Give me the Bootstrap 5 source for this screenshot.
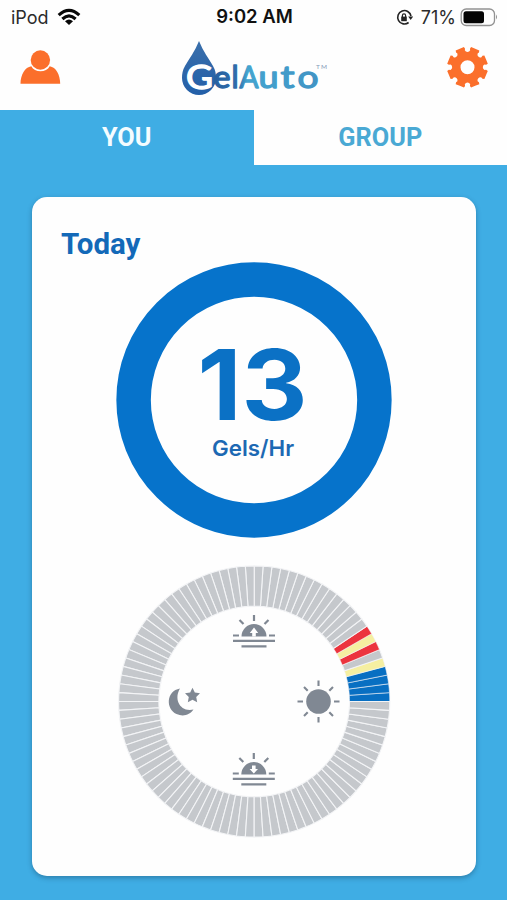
<!DOCTYPE html>
<html lang="en">
<head>
<meta charset="utf-8">
<meta name="viewport" content="width=device-width, initial-scale=1">
<title>GelAuto</title>
<link rel="stylesheet" href="https://cdn.jsdelivr.net/npm/bootstrap@5.3.0/dist/css/bootstrap.min.css">
<style>
body{background:#3fade4;font-family:Inter,"Liberation Sans",sans-serif;height:900px;overflow:hidden}
.top-area{height:110px;background:#fefefe}
.status-row{height:34px;padding:0 9px 0 11px;font-size:18px;color:#2b2b2b}
.status-row>div{flex:1 1 0}
.clock{font-weight:600;font-size:18.500px;color:#111;white-space:nowrap}
.brand-row{height:76px;padding:0 19px 0 20px}
.tab-row{height:55px;font-family:Roboto,sans-serif;font-weight:700;font-size:25.300px}
.tab-row .nav-link{border-radius:0;padding:0;color:#4aa9d4;background:#fefefe;height:55px;line-height:56px}
.tab-row .nav-link.active{background:#3fade4;color:#f4fcff}
.panel{margin:32px 31px 0 32px;height:679px;border:0;border-radius:15px;background:#fefefe;box-shadow:0 2px 5px rgba(20,60,90,.4)}
.panel h1{font:700 29.5px/36px Roboto,sans-serif;color:#1369b8;margin:29px 0 0 29px}
svg{display:block}
svg text{font-family:Inter,sans-serif}
.logo text{font-family:Lato,sans-serif;font-weight:400}
</style>
<script src="https://cdn.jsdelivr.net/npm/bootstrap@5.3.0/dist/js/bootstrap.bundle.min.js"></script>
</head>
<body>
<header class="top-area">
  <div class="status-row d-flex align-items-center">
    <div class="d-flex align-items-center gap-2"><span>iPod</span>
      <svg width="24" height="18" viewBox="0 0 24 18" fill="none" stroke="#080808" stroke-width="3.1"><path d="M1.7 7.2Q12 -2.5 22.3 7.2M5.4 11Q12 4.8 18.6 11"/><path d="M8 13.2Q12 9.8 16 13.2L12 17Z" fill="#080808" stroke="none"/></svg>
    </div>
    <div class="clock text-center">9:02 AM</div>
    <div class="d-flex align-items-center justify-content-end">
      <svg width="17" height="17" viewBox="0 0 17 17" class="me-2" fill="none" stroke="#222" stroke-width="1.6"><path d="M12.6 13.5A6.7 6.7 0 1 1 15 7"/><path d="M12.2 7.5h5l-2.5 3.4z" fill="#222" stroke="none"/><path d="M5.2 7.6h5.6v4.6H5.2z" fill="#222" stroke="none"/><path d="M6.4 8V6.4a1.6 1.6 0 0 1 3.2 0V8" stroke-width="1.2"/></svg>
      <span>71%</span>
      <svg width="38" height="19" viewBox="0 0 38 19" class="ms-1"><rect x="1.2" y="1" width="33.3" height="16.5" rx="5" fill="none" stroke="#929292" stroke-width="1.3"/><rect x="3.5" y="3.2" width="20.5" height="12" rx="2.5" fill="#050505"/><path d="M36 6.5q2 2.5 0 5z" fill="#929292"/></svg>
    </div>
  </div>
  <div class="brand-row d-flex justify-content-between">
    <svg width="41" height="76" viewBox="20 34 41 76" fill="#fb6f2b"><path d="M20.5 83.7C20.500 75 25 67 31.300 66.200C33 69.500 36.500 71.200 40.500 71.200C44.500 71.200 48 69.500 49.700 66.200C56 67 60.200 75 60.200 83.700Z"/><circle cx="40.4" cy="60" r="9.7"/></svg>
    <svg class="logo" width="150" height="76" viewBox="179 34 150 76" role="img" aria-label="GelAuto">
      <defs><linearGradient id="dropFill" x1="0" y1="0" x2="0" y2="1"><stop offset="0" stop-color="#3a6fab"/><stop offset="1" stop-color="#235fa8"/></linearGradient>
      <linearGradient id="wordFill" gradientUnits="userSpaceOnUse" x1="213" y1="0" x2="320" y2="0"><stop offset="0" stop-color="#285f9f"/><stop offset=".24" stop-color="#2e6fac"/><stop offset=".32" stop-color="#44a4cf"/><stop offset="1" stop-color="#4193c4"/></linearGradient></defs>
      <path d="M199 41C203 51 209 59 213 66Q216 71 216 78A17 17 0 0 1 182 78Q182 71 185 66C189 59 195 51 199 41Z" fill="url(#dropFill)"/>
      <text x="186" y="89" font-size="32.500" textLength="27" lengthAdjust="spacingAndGlyphs" fill="#fff" stroke="#fff" stroke-width="1.300">G</text>
      <g fill="url(#wordFill)" stroke="url(#wordFill)" stroke-width="1.300" stroke-linejoin="round" font-size="30"><text x="213.500" y="87.500" textLength="17" lengthAdjust="spacingAndGlyphs">e</text><text x="231.500" y="87.500">l</text><text x="239.500" y="87.500" textLength="19" lengthAdjust="spacingAndGlyphs">A</text><text x="258.500" y="87.500" textLength="20" lengthAdjust="spacingAndGlyphs">u</text><text x="280.500" y="87.500" textLength="14" lengthAdjust="spacingAndGlyphs">t</text><text x="297.500" y="87.500" textLength="21" lengthAdjust="spacingAndGlyphs">o</text></g>
      <text x="316" y="69" font-size="6.500" fill="#8599b8" textLength="11">TM</text>
    </svg>
    <svg width="41" height="76" viewBox="-20.500 -33.300 41 76"><path id="gearBody" fill="#fb6f2b" fill-rule="evenodd" d=""/></svg>
  </div>
</header>

<nav class="tab-row nav nav-pills nav-fill flex-nowrap">
  <a class="nav-link active w-50" href="#">YOU</a>
  <a class="nav-link w-50" href="#">GROUP</a>
</nav>

<main class="card panel">
  <h1>Today</h1>
  <svg width="444" height="614" viewBox="32 262 444 614">
    <circle cx="254" cy="400" r="120.400" fill="none" stroke="#0673cb" stroke-width="34.500"/>
    <text x="197.500" y="419.500" font-size="98" font-weight="700" fill="#0b71c5" textLength="110" lengthAdjust="spacingAndGlyphs">13</text>
    <text x="212" y="456" font-size="22" font-weight="600" fill="#1d69b3" textLength="82" lengthAdjust="spacingAndGlyphs">Gels/Hr</text>
    <!-- day dial: 96 quarter-hour slots -->
    <g id="dial" transform="translate(254.200 701.500)"></g>
    <defs><g id="horizon" stroke="#808893" stroke-width="2.200" fill="none"><path d="M0 -17.500V-11.500M-14.500 -12.500L-10.500 -8.500M14.500 -12.500L10.500 -8.500M-21 3H-15M15 3H21M-21 8.400H21M-12.500 13.800H12.500"/><path d="M-12.500 4A12.500 12.500 0 0 1 12.500 4Z" fill="#808893" stroke="none"/></g></defs>
    <g transform="translate(254 632.500)"><use href="#horizon"/><path d="M0 -5L4.200 .5H1.800V4H-1.800V.5H-4.200Z" fill="#fff"/></g>
    <g transform="translate(253.800 770.500)"><use href="#horizon"/><path d="M0 3L4.200 -1.500H1.800V-5H-1.800V-1.500H-4.200Z" fill="#fff"/></g>
    <g transform="translate(318.500 701.500)" stroke="#808893" stroke-width="2.100"><circle r="12.300" fill="#808893" stroke="none"/><path d="M0 -21V-15.500M0 21V15.500M-21 0H-15.500M21 0H15.500M-14.500 -14.500L-10.800 -10.800M14.500 14.500L10.800 10.800M-14.500 14.500L-10.800 10.800M14.500 -14.500L10.800 -10.800"/></g>
    <g fill="#808893"><path d="M180 688.500C166 691 165.500 709 176.500 714C183 717 190 715 193.500 709.500C180 712.500 173.500 699 180 688.500Z"/><path d="M192.500 687.800L194.800 692.600L200 693.300L196.200 697L197.200 702.200L192.500 699.700L187.800 702.200L188.800 697L185 693.300L190.200 692.600Z"/></g>
  </svg>
</main>

<script>
const polar = (r, a) => (r * Math.cos(a)).toFixed(2) + ' ' + (r * Math.sin(a)).toFixed(2);

// Slots run counter-clockwise from the right-hand side of the dial.
const blue = '#086fc2', yellow = '#f5efa1', red = '#ec343e', grey = '#c5c8cc';
const logged = [blue, blue, blue, blue, yellow, grey, red, yellow, red];
let slots = '';
for (let i = 0; i < 96; i++) {
  const step = Math.PI / 48, a = -i * step, b = a - step;
  slots += `<path d="M${polar(135.6, a)}A135.6 135.6 0 0 0 ${polar(135.6, b)}L${polar(95.3, b)}A95.3 95.3 0 0 1 ${polar(95.3, a)}Z" fill="${logged[i] || grey}" stroke="#f3f4f6" stroke-width="${logged[i] && logged[i] !== grey ? .6 : 1.1}"/>`;
}
document.getElementById('dial').innerHTML = slots;

// Gear with eight teeth and rounded valleys
let gear = '';
for (let i = 0; i < 8; i++) {
  const m = (22.5 + i * 45) * Math.PI / 180, d = x => x * Math.PI / 180;
  gear += `${i ? 'L' : 'M'}${polar(17.2, m - d(13.5))}L${polar(18.8, m - d(15))}L${polar(20.6, m - d(12.5))}L${polar(20.1, m)}L${polar(20.6, m + d(12.5))}L${polar(18.8, m + d(15))}L${polar(17.2, m + d(13.5))}A3 3 0 0 0 ${polar(17.2, m + d(31.5))}`;
}
document.getElementById('gearBody').setAttribute('d', gear + 'ZM7 0A7 7 0 1 0 -7 0A7 7 0 1 0 7 0Z');
</script>
</body>
</html>
